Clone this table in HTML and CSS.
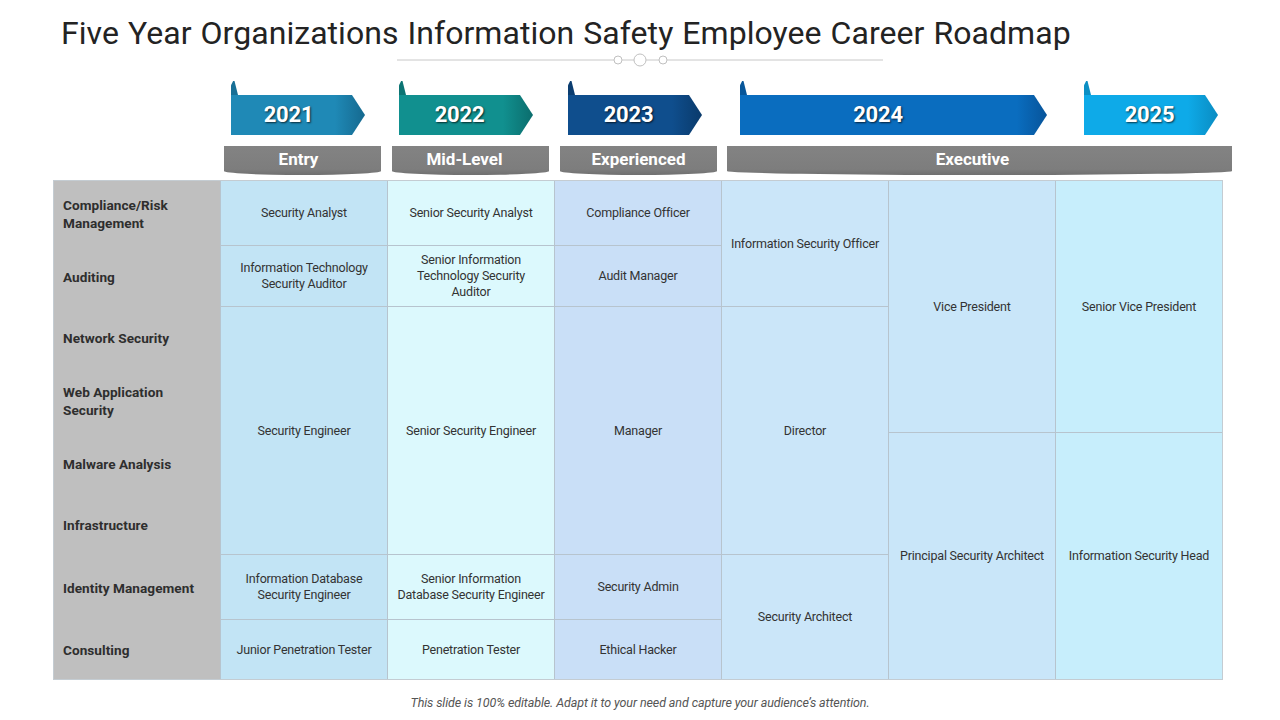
FILE: index.html
```html
<!DOCTYPE html>
<html lang="en">
<head>
<meta charset="utf-8">
<title>Five Year Organizations Information Safety Employee Career Roadmap</title>
<link rel="stylesheet" href="styles.css">
</head>
<body>
<div class="slide">
  <header class="head">
    <h1 class="title">Five Year Organizations Information Safety Employee Career Roadmap</h1>
    <svg class="divider" width="486" height="14" viewBox="0 0 486 14" aria-hidden="true">
      <line x1="0" y1="7" x2="217" y2="7" stroke="#c8c8c8" stroke-width="1"/>
      <circle cx="221" cy="7" r="4" fill="#fff" stroke="#c0c0c0" stroke-width="1"/>
      <line x1="225" y1="7" x2="237" y2="7" stroke="#c8c8c8" stroke-width="1"/>
      <circle cx="243" cy="7" r="6" fill="#fff" stroke="#c0c0c0" stroke-width="1"/>
      <line x1="249" y1="7" x2="262" y2="7" stroke="#c8c8c8" stroke-width="1"/>
      <circle cx="266" cy="7" r="4" fill="#fff" stroke="#c0c0c0" stroke-width="1"/>
      <line x1="270" y1="7" x2="486" y2="7" stroke="#c8c8c8" stroke-width="1"/>
    </svg>
  </header>

  <div class="years">
    <div class="yr y2021"><span class="tab"></span><div class="shape">2021</div></div>
    <div class="yr y2022"><span class="tab"></span><div class="shape">2022</div></div>
    <div class="yr y2023"><span class="tab"></span><div class="shape">2023</div></div>
    <div class="yr y2024"><span class="tab"></span><div class="shape">2024</div></div>
    <div class="yr y2025"><span class="tab"></span><div class="shape">2025</div></div>
  </div>

  <div class="levels">
    <div class="lvl l-entry">Entry</div>
    <div class="lvl l-mid">Mid-Level</div>
    <div class="lvl l-exp">Experienced</div>
    <div class="lvl l-exec">Executive</div>
  </div>

  <div class="grid">
    <div class="lab">Compliance/Risk<br>Management</div>
    <div class="lab">Auditing</div>
    <div class="lab">Network Security</div>
    <div class="lab">Web Application<br>Security</div>
    <div class="lab">Malware Analysis</div>
    <div class="lab">Infrastructure</div>
    <div class="lab">Identity Management</div>
    <div class="lab">Consulting</div>

    <div class="cell k1">Security Analyst</div>
    <div class="cell k1">Information Technology<br>Security Auditor</div>
    <div class="cell k1 s4">Security Engineer</div>
    <div class="cell k1">Information Database<br>Security Engineer</div>
    <div class="cell k1 end">Junior Penetration Tester</div>

    <div class="cell k2">Senior Security Analyst</div>
    <div class="cell k2">Senior Information<br>Technology Security<br>Auditor</div>
    <div class="cell k2 s4">Senior Security Engineer</div>
    <div class="cell k2">Senior Information<br>Database Security Engineer</div>
    <div class="cell k2 end">Penetration Tester</div>

    <div class="cell k3">Compliance Officer</div>
    <div class="cell k3">Audit Manager</div>
    <div class="cell k3 s4">Manager</div>
    <div class="cell k3">Security Admin</div>
    <div class="cell k3 end">Ethical Hacker</div>

    <div class="cell k4 s2">Information Security Officer</div>
    <div class="cell k4 s4">Director</div>
    <div class="cell k4 s2 end">Security Architect</div>

    <div class="cell k5 s4">Vice President</div>
    <div class="cell k5 s4 end">Principal Security Architect</div>

    <div class="cell k6 s4">Senior Vice President</div>
    <div class="cell k6 s4 end">Information Security Head</div>
  </div>

  <p class="note">This slide is 100% editable. Adapt it to your need and capture your audience’s attention.</p>
</div>
</body>
</html>
```

FILE: styles.css
```css
* { box-sizing: border-box; }

html, body {
  margin: 0;
  padding: 0;
  background: #ffffff;
}

.slide {
  width: 1280px;
  height: 720px;
  overflow: hidden;
  font-family: Roboto, "Liberation Sans", sans-serif;
  color: #333;
}

.head {
  display: flex;
  flex-direction: column;
  align-items: flex-start;
}

.title {
  margin: 0;
  padding: 15px 0 0 61px;
  font-size: 32px;
  line-height: 36px;
  font-weight: 400;
  color: #232323;
  letter-spacing: 0.05px;
  word-spacing: 1px;
}

.divider {
  display: block;
  margin: 2px 0 0 397px;
}

/* Year arrows */
.years {
  display: grid;
  grid-template-columns: repeat(7, 167px);
  margin: 13px 0 0 53px;
  height: 55px;
}

.yr {
  display: flex;
  flex-direction: column;
  align-items: flex-start;
}

.tab {
  display: block;
  width: 7px;
  height: 14px;
  margin-top: 1px;
  clip-path: polygon(0 100%, 0 30%, 30% 0, 50% 0, 100% 100%);
}

.shape {
  width: 100%;
  height: 40px;
  line-height: 40px;
  padding-right: 13px;
  text-align: center;
  font-size: 22px;
  font-weight: 700;
  color: #fff;
  letter-spacing: -0.2px;
  text-shadow: 1px 1px 2px rgba(0, 0, 0, 0.7);
  clip-path: polygon(0 0, calc(100% - 13px) 0, 100% 50%, calc(100% - 13px) 100%, 0 100%);
}

.y2021 { grid-column: 2; margin-left: 11px; width: 134px; }
.y2022 { grid-column: 3; margin-left: 12px; width: 134px; }
.y2023 { grid-column: 4; margin-left: 14px; width: 134px; }
.y2024 { grid-column: 5 / 7; margin-left: 19px; width: 307px; }
.y2025 { grid-column: 7; margin-left: 29px; width: 134px; }

.y2021 .shape { padding-right: 19px; }
.y2024 .shape { padding-right: 31px; }
.y2025 .shape { padding-right: 3px; }

.y2021 .shape { background: linear-gradient(to right, #1f89b6 0, #1f89b6 calc(100% - 30px), #15698f 100%); }
.y2021 .tab { background: #176f96; }
.y2022 .shape { background: linear-gradient(to right, #11908f 0, #11908f calc(100% - 30px), #0b6d6d 100%); }
.y2022 .tab { background: #0c7473; }
.y2023 .shape { background: linear-gradient(to right, #0f4e8d 0, #0f4e8d calc(100% - 30px), #0a3a6b 100%); }
.y2023 .tab { background: #0b3d70; }
.y2024 .shape { background: linear-gradient(to right, #0a6dbf 0, #0a6dbf calc(100% - 30px), #07549a 100%); }
.y2024 .tab { background: #07569a; }
.y2025 .shape { background: linear-gradient(to right, #0eaae8 0, #0eaae8 calc(100% - 30px), #0a8cc2 100%); }
.y2025 .tab { background: #0b8fc4; }

/* Level bars */
.levels {
  display: grid;
  grid-template-columns: repeat(7, 167px);
  margin: 11px 0 0 53px;
  height: 34px;
}

.lvl {
  height: 29px;
  padding: 2px 8px 0 0;
  background: linear-gradient(to bottom, #838383 0, #7d7d7d 80%, #707070 100%);
  border-radius: 0 0 50% 50% / 0 0 4px 4px;
  color: #fff;
  font-size: 17px;
  font-weight: 700;
  line-height: 22px;
  text-align: center;
  letter-spacing: 0;
}

.l-entry { grid-column: 2; margin-left: 4px; width: 157px; }
.l-mid { grid-column: 3; margin-left: 5px; width: 157px; padding-right: 12px; }
.l-exp { grid-column: 4; margin-left: 6px; width: 157px; padding-right: 0; }
.l-exec { grid-column: 5 / 8; margin-left: 6px; width: 505px; padding-right: 14px; }

/* Table */
.grid {
  display: grid;
  grid-template-columns: 166px repeat(6, 167px);
  grid-template-rows: 65px 61px 62px 64px 62px 60px 65px 59px;
  grid-auto-flow: column;
  margin-left: 53px;
  width: 1170px;
  border: 1px solid #c4ccd2;
}

.lab {
  display: flex;
  align-items: center;
  padding-left: 9px;
  background: #bfbfbf;
  font-size: 13.6px;
  font-weight: 700;
  line-height: 18px;
  color: #2e2e2e;
  letter-spacing: 0.05px;
}

.cell {
  display: flex;
  align-items: center;
  justify-content: center;
  text-align: center;
  padding: 0 4px;
  font-size: 12.5px;
  line-height: 16px;
  letter-spacing: -0.2px;
  color: #333;
  border-left: 1px solid #b7c4ce;
  border-bottom: 1px solid #b7c4ce;
}

.s2 { grid-row: span 2; }
.s4 { grid-row: span 4; }
.end { border-bottom: none; }

.k1 { background: #c2e4f5; }
.k2 { background: #dcf9fd; }
.k3 { background: #c9dff7; }
.k4 { background: #cbe6f9; }
.k5 { background: #c9e6f9; }
.k6 { background: #c7eefc; }

.note {
  margin: 15px 0 0;
  text-align: center;
  font-size: 12.5px;
  font-style: italic;
  line-height: 16px;
  color: #555;
  letter-spacing: -0.1px;
}
```
